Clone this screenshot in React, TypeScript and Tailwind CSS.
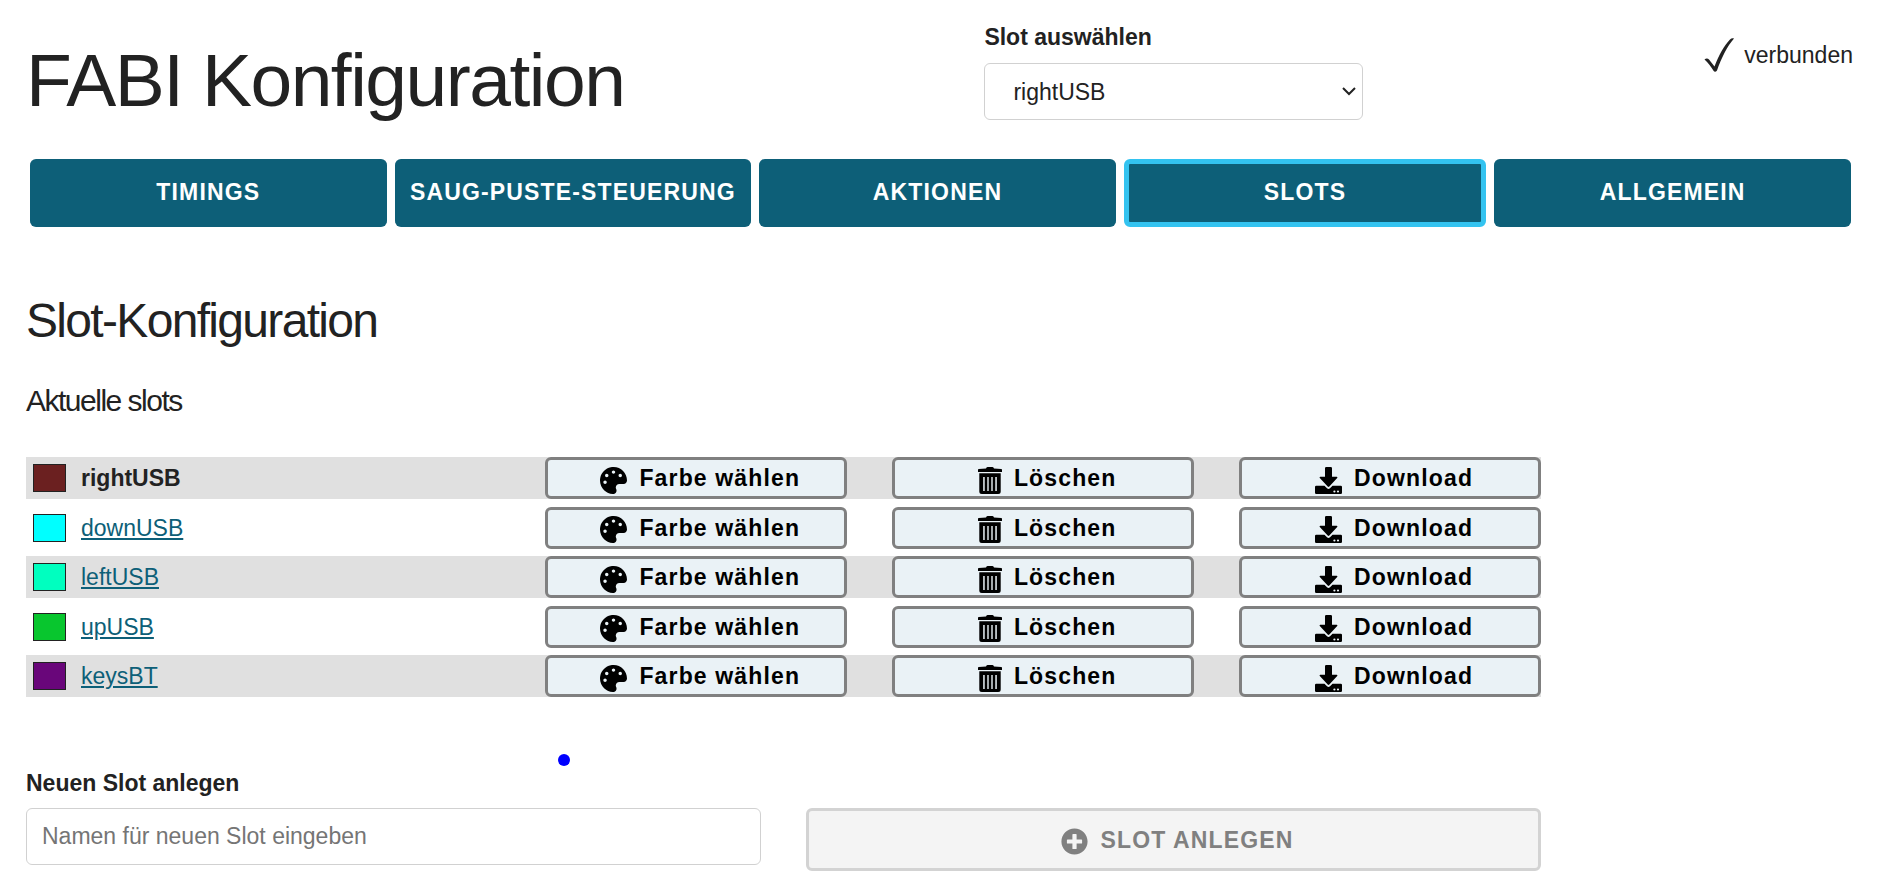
import { useState } from "react";
import type { ReactNode } from "react";
import { FaPalette, FaPlusCircle } from "react-icons/fa";

const tabs = ["Timings", "Saug-Puste-Steuerung", "Aktionen", "Slots", "Allgemein"];

const slots = [
  { name: "rightUSB", color: "bg-[#6b2020]" },
  { name: "downUSB", color: "bg-[#00ffff]" },
  { name: "leftUSB", color: "bg-[#00ffbf]" },
  { name: "upUSB", color: "bg-[#08c62e]" },
  { name: "keysBT", color: "bg-[#69067a]" },
];

function TrashIcon() {
  return (
    <svg viewBox="0 0 24 27" className="mt-1 h-[27px] w-6" fill="currentColor" aria-hidden="true">
      <path d="M8 1.500Q8.300 0 9.500 0h5Q15.700 0 16 1.500L23.200 2Q24 2 24 2.800V5H0V2.800Q0 2 0.800 2Z" />
      <path
        fillRule="evenodd"
        d="M1.300 6.300h21.400V24.500Q22.700 27 20.200 27H3.800Q1.300 27 1.300 24.500ZM5.200 10v14h1.500V10ZM9.300 10v14h1.400V10ZM13.300 10v14h1.400V10ZM17.300 10v14h1.500V10Z"
      />
    </svg>
  );
}

function DownloadIcon() {
  return (
    <svg viewBox="0 0 27 27" className="mt-1 size-[27px]" fill="currentColor" aria-hidden="true">
      <path d="M11.200 0h4.600Q17 0 17 1.200V9.700H21.700Q23 9.900 22.200 11L14.300 19.500Q13.500 20.300 12.700 19.500L4.800 11Q4 9.900 5.300 9.700H10V1.200Q10 0 11.200 0Z" />
      <path
        fillRule="evenodd"
        d="M1.200 18.800H9.500L12 21.300Q13.500 22.500 15 21.300L17.500 18.800H25.800Q27 18.800 27 20V25.800Q27 27 25.800 27H1.200Q0 27 0 25.800V20Q0 18.800 1.200 18.800ZM18.300 24.500a1.100 1.100 0 1 0 2.200 0a1.100 1.100 0 1 0-2.200 0ZM21.900 24.500a1.100 1.100 0 1 0 2.200 0a1.100 1.100 0 1 0-2.200 0Z"
      />
    </svg>
  );
}

function RowButton({ icon, children }: { icon: ReactNode; children: ReactNode }) {
  return (
    <button
      type="button"
      className="flex h-full items-center justify-center gap-3 rounded-md border-[3px] border-[#808080] bg-[#eaf2f6] pl-2 font-bold tracking-wider text-black"
    >
      {icon}
      {children}
    </button>
  );
}

export default function App() {
  const [activeTab, setActiveTab] = useState("Slots");
  const [activeSlot, setActiveSlot] = useState("rightUSB");
  const [newName, setNewName] = useState("");

  return (
    <div className="relative px-[26px] pt-6 font-['Liberation_Sans',Arial,sans-serif] text-[23px] leading-9 text-[#222222]">
      <header className="flex items-start">
        <h1 className="w-[52.4%] pt-[11px] text-[75px] leading-[90px] tracking-[-0.02em]">FABI Konfiguration</h1>
        <div className="w-[20.7%]">
          <label htmlFor="slot-select" className="block pb-1 leading-[27px] font-bold">
            Slot auswählen
          </label>
          <div className="relative mt-2">
            <select
              id="slot-select"
              value={activeSlot}
              onChange={(e) => setActiveSlot(e.target.value)}
              className="h-[57px] w-full appearance-none rounded-md border border-[#d1d1d1] bg-white pr-9 pl-7"
            >
              {slots.map((s) => (
                <option key={s.name}>{s.name}</option>
              ))}
            </select>
            <svg
              viewBox="0 0 14 9"
              className="pointer-events-none absolute top-6 right-[7px] h-[9px] w-[14px]"
              fill="none"
              stroke="#222222"
              strokeWidth="2"
            >
              <path d="M1 1l6 6 6-6" />
            </svg>
          </div>
        </div>
        <p className="ml-auto flex items-center gap-[10px] pt-[13px] pr-0.5">
          <svg viewBox="0 0 30 34" className="h-[34px] w-[30px]" fill="#222222">
            <path d="M0.500 21.500C2 20 3.800 20 5 21.500L10.500 28.500C15 17 20 7.500 26 1.500C27.200 0.300 28.500 0.200 30 0.500C23 8.500 17.500 20 13 32.500C11.800 34 10.400 34 9.500 32.800C7 29 4 24.500 0.500 21.500Z" />
          </svg>
          verbunden
        </p>
      </header>

      <nav className="mx-1 mt-[34px] flex gap-2">
        {tabs.map((tab) => (
          <button
            key={tab}
            type="button"
            onClick={() => setActiveTab(tab)}
            className={`flex h-[68px] flex-1 items-center justify-center rounded-md bg-[#0d5f78] pb-0.5 font-bold tracking-wider whitespace-nowrap text-white uppercase ${
              tab === activeTab ? "border-[5px] border-[#33c3f0] px-[10px]" : "border-y-[5px] border-[#0d5f78] px-3"
            }`}
          >
            {tab}
          </button>
        ))}
      </nav>

      <main className="max-w-[1515px]">
        <h2 className="mt-16 text-[48px] leading-[60px] tracking-[-0.035em]">Slot-Konfiguration</h2>
        <h3 className="mt-7 text-[30px] leading-[44px] tracking-tighter">Aktuelle slots</h3>

        <ul className="mt-[34px] flex h-60 flex-col justify-between">
          {slots.map((slot) => (
            <li
              key={slot.name}
              className="grid h-[42px] grid-cols-[11fr_7fr_7fr_7fr] items-center gap-x-[45px] odd:bg-[#e0e0e0]"
            >
              <div className="flex items-center gap-[15px] pl-[7px]">
                <span className={`h-7 w-[33px] border border-[#222222] ${slot.color}`} />
                {slot.name === activeSlot ? (
                  <strong>{slot.name}</strong>
                ) : (
                  <a href={`#${slot.name}`} onClick={() => setActiveSlot(slot.name)} className="text-[#0d5f78] underline">
                    {slot.name}
                  </a>
                )}
              </div>
              <RowButton icon={<FaPalette className="mt-1 size-[27px]" />}>Farbe wählen</RowButton>
              <RowButton icon={<TrashIcon />}>Löschen</RowButton>
              <RowButton icon={<DownloadIcon />}>Download</RowButton>
            </li>
          ))}
        </ul>

        <form className="mt-[68px]" onSubmit={(e) => e.preventDefault()}>
          <label htmlFor="new-slot" className="block font-bold">
            Neuen Slot anlegen
          </label>
          <div className="mt-[7px] grid grid-cols-2 items-start gap-x-[45px]">
            <input
              id="new-slot"
              type="text"
              value={newName}
              onChange={(e) => setNewName(e.target.value)}
              placeholder="Namen für neuen Slot eingeben"
              className="h-[57px] rounded-md border border-[#d1d1d1] px-[15px] placeholder:text-[#757575]"
            />
            <button
              type="submit"
              disabled={newName === ""}
              className="flex h-[63px] items-center justify-center gap-3 rounded-md border-[3px] border-[#d3d3d3] bg-[#f4f4f4] pl-2 font-bold tracking-wider text-[#808080] uppercase"
            >
              <FaPlusCircle className="mt-1 size-[27px]" />
              Slot anlegen
            </button>
          </div>
        </form>
      </main>

      <span className="pointer-events-none absolute top-[754px] left-[558px] size-3 rounded-full bg-[#0000ff]" />
    </div>
  );
}
